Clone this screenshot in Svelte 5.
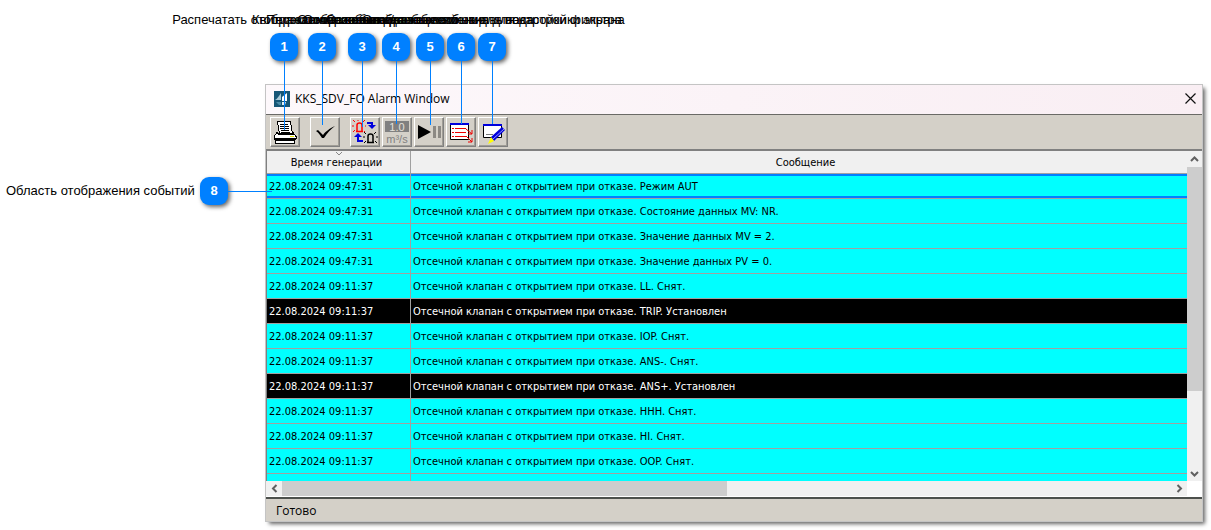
<script>
  const callouts = [
    { n: 1, x: 284, line: 69, text: 'Распечатать отображаемые события' },
    { n: 2, x: 322, line: 64, text: 'Квитирование событий' },
    { n: 3, x: 362, line: 66, text: 'Переключение окна сообщений' },
    { n: 4, x: 396, line: 63, text: 'Отображение данных события' },
    { n: 5, x: 430, line: 64, text: 'Остановка/возобновление вывода' },
    { n: 6, x: 461, line: 63, text: 'Отображение диалогового окна для настройки экрана' },
    { n: 7, x: 492, line: 63, text: 'Отображение окна для настройки фильтра' }
  ];

  const valve = 'Отсечной клапан с открытием при отказе. ';

  const events = [
    { time: '22.08.2024 09:47:31', text: 'Режим AUT', selected: true },
    { time: '22.08.2024 09:47:31', text: 'Состояние данных MV: NR.' },
    { time: '22.08.2024 09:47:31', text: 'Значение данных MV = 2.' },
    { time: '22.08.2024 09:47:31', text: 'Значение данных PV = 0.' },
    { time: '22.08.2024 09:11:37', text: 'LL. Снят.' },
    { time: '22.08.2024 09:11:37', text: 'TRIP. Установлен', alarm: true },
    { time: '22.08.2024 09:11:37', text: 'IOP. Снят.' },
    { time: '22.08.2024 09:11:37', text: 'ANS-. Снят.' },
    { time: '22.08.2024 09:11:37', text: 'ANS+. Установлен', alarm: true },
    { time: '22.08.2024 09:11:37', text: 'HHH. Снят.' },
    { time: '22.08.2024 09:11:37', text: 'HI. Снят.' },
    { time: '22.08.2024 09:11:37', text: 'OOP. Снят.' }
  ];
</script>

<main class="page">
  <section class="window">
    <header class="titlebar">
      <svg class="logo" viewBox="0 0 16 16" width="16" height="16">
        <rect width="16" height="16" fill="#175776" />
        <path d="M7 2v7H1C3 8 5 5 7 2z" fill="#a9c9d6" />
        <path d="M8 6l5-4v8H8z" fill="#fff" />
        <path d="M2 11h5v3H5z" fill="#4c8da8" />
        <path d="M8 11h4l-1 3H8z" fill="#e4f1f5" />
      </svg>
      <h1>KKS_SDV_FO Alarm Window</h1>
      <button class="close" aria-label="Закрыть">
        <svg viewBox="0 0 11 11" width="11" height="11"><path d="M.5.5l10 10M10.5.5l-10 10" stroke="#111" stroke-width="1.2" /></svg>
      </button>
    </header>

    <div class="toolbar">
      <button class="tool" aria-label="Печать">
        <svg viewBox="0 0 26 26" width="26" height="26" shape-rendering="crispEdges">
          <path d="M5.500 2.500h13l2 12h-13z" fill="#fff" stroke="#000" />
          <path d="M8 5.500h8M8 7.500h9M8 9.500h9M9 11.500h8M9 13.500h9" stroke="#000" fill="none" />
          <path d="M5 13.500l-3 4v2h22v-2l-3-4v2H7z" fill="#fff" stroke="#000" />
          <path d="M2 19h22v2H2z" fill="#000" />
          <path d="M18 17h4v1h-4z" fill="#e5e500" />
          <path d="M3.500 21.500h19v3h-19z" fill="#fff" stroke="#000" />
        </svg>
      </button>
      <button class="tool" aria-label="Квитировать">
        <svg viewBox="0 0 26 26" width="26" height="26"><path d="M4 12l2-1 5 5c3-4 6-6 12-9-4 3-8 7-11 12h-2c-2-3-3-5-6-7z" fill="#000" /></svg>
      </button>
      <div class="group">
        <button class="tool" aria-label="Переключить">
          <svg viewBox="0 0 26 26" width="26" height="26" fill="none">
            <path d="M5 12V6q0-2 2.500-2T10 6v6M4 12.500h7" stroke="#f00" stroke-width="1.500" />
            <path d="M1 1l2 2M6 1v1M13 1l-2 2M0 7h2M13 7h1M1 13l2-2M13 13l-1-1" stroke="#f00" />
            <path d="M15 4h5v3" stroke="#00d" stroke-width="2" />
            <path d="M16 6h8l-4 4z" fill="#00d" />
            <path d="M11 22H6v-4" stroke="#00d" stroke-width="2" />
            <path d="M2 18h8l-4-4z" fill="#00d" />
            <path d="M16 23v-6q0-2 2.500-2t2.500 2v6M15 23.500h7" stroke="#000" stroke-width="1.500" />
            <path d="M12 13l2 2M24 13l-2 2M11 18h2M24 18h2M12 24l2-2M25 24l-2-2" stroke="#000" />
          </svg>
        </button>
        <button class="tool" aria-label="Данные">
          <svg viewBox="0 0 26 26" width="26" height="26">
            <rect x="1" y="2" width="24" height="11" fill="#808080" />
            <text x="13" y="12" text-anchor="middle" fill="#e4e1dc">1.0</text>
            <text x="13" y="24" text-anchor="middle" fill="#808080">m³/s</text>
          </svg>
        </button>
        <button class="tool" aria-label="Пауза">
          <svg viewBox="0 0 26 26" width="26" height="26">
            <path d="M2 6l13 7-13 7z" fill="#000" />
            <path d="M17 7h3v12h-3zM22 7h3v12h-3z" fill="#8c8984" />
          </svg>
        </button>
        <button class="tool" aria-label="Настройки экрана">
          <svg viewBox="0 0 26 26" width="26" height="26" fill="none">
            <path d="M2.500 5.500h18v15h-18z" fill="#fff" stroke="#000" />
            <path d="M2 4h19v2H2z" fill="#00d" />
            <path d="M4 9.500h2M4 13.500h2M4 17.500h2M7 9.500h11M7 13.500h11M7 17.500h11" stroke="#e00" />
            <path d="M18 10l6 5M24 11v4h-4M18 17l6 6M24 19v4h-4" stroke="#e00" />
          </svg>
        </button>
        <button class="tool" aria-label="Настройки фильтра">
          <svg viewBox="0 0 26 26" width="26" height="26">
            <path d="M3.500 6.500h18v12h-18z" fill="#fff" stroke="#000" />
            <path d="M3 5h19v2H3z" fill="#00d" />
            <path d="M6 15.500h7" stroke="#777" />
            <path d="M11 18L22 8l3 3-11 11z" fill="#00d" />
            <path d="M13 20L24 10" stroke="#fff" stroke-width=".6" />
            <path d="M11 18l3 4-6 3z" fill="#ff0" />
          </svg>
        </button>
      </div>
    </div>

    <div class="viewer">
      <div class="viewport">
        <table>
          <thead>
            <tr>
              <th class="time">
                <svg class="sort" viewBox="0 0 8 4" width="8" height="4"><path d="M1 0l3 3 3-3" fill="none" stroke="#888" /></svg>
                Время генерации
              </th>
              <th class="message">Сообщение</th>
            </tr>
          </thead>
          <tbody>
            {#each events as event}
              <tr class:selected={event.selected} class:alarm={event.alarm}>
                <td>{event.time}</td>
                <td>{valve}{event.text}</td>
              </tr>
            {/each}
            <tr class="rest"><td></td><td></td></tr>
          </tbody>
        </table>
      </div>
      <div class="scroll vertical">
        <button aria-label="Вверх"><svg viewBox="0 0 9 9" width="9" height="9"><path d="M1 6l3.500-3.500L8 6" /></svg></button>
        <div class="track"><div class="thumb"></div></div>
        <button aria-label="Вниз"><svg viewBox="0 0 9 9" width="9" height="9"><path d="M1 3l3.500 3.500L8 3" /></svg></button>
      </div>
      <div class="scroll horizontal">
        <button aria-label="Влево"><svg viewBox="0 0 9 9" width="9" height="9"><path d="M6.500 1L3 4.500 6.500 8" /></svg></button>
        <div class="track"><div class="thumb"></div></div>
        <button aria-label="Вправо"><svg viewBox="0 0 9 9" width="9" height="9"><path d="M2.500 1L6 4.500 2.500 8" /></svg></button>
      </div>
    </div>

    <footer class="status">Готово</footer>
  </section>

  {#each callouts as c}
    <div class="callout" style="left: {c.x}px">
      <span class="label">{c.text}</span>
      <span class="badge">{c.n}</span>
      <span class="line" style="height: {c.line}px"></span>
    </div>
  {/each}

  <div class="callout-side">
    <span class="label">Область отображения событий</span>
    <span class="badge">8</span>
    <span class="line"></span>
  </div>
</main>

<style>
  :global(body) {
    margin: 0;
    background: #fff;
  }

  .page {
    position: relative;
    padding: 85px 9px 9px 266px;
    font-family: 'Liberation Sans', Arial, sans-serif;
    font-size: 13px;
    color: #000;
  }

  button {
    margin: 0;
    padding: 0;
    border: 0;
    background: none;
    display: flex;
    align-items: center;
    justify-content: center;
  }

  .window {
    box-shadow: 0 0 0 1px #c4c4c4, 3px 3px 4px #666;
    background: #fff;
  }

  .titlebar {
    display: flex;
    align-items: center;
    gap: 5px;
    height: 30px;
    padding: 0 6px 2px 8px;
    background: linear-gradient(90deg, #fdf8fb, #f9eef3);
    border-bottom: 1px solid #6a6a66;
    box-sizing: border-box;
  }

  .titlebar h1 {
    flex: 1;
    margin: 0;
    font: 12px/16px 'Open Sans', 'Noto Sans', sans-serif;
  }

  .toolbar {
    display: flex;
    gap: 10px;
    padding: 2px 4px;
    background: #d4d0c8;
    border-bottom: 2px solid #808080;
  }

  .group {
    display: flex;
    gap: 2px;
  }

  .tool {
    width: 30px;
    height: 30px;
    border: 1px solid;
    border-color: #fff #808080 #808080 #fff;
    box-shadow: inset -1px -1px #a09d96;
  }

  .tool text {
    font: 11px 'Liberation Sans', Arial, sans-serif;
  }

  .viewer {
    display: grid;
    grid-template-columns: 1fr 15px;
    border-bottom: 2px solid #4c504c;
    padding-bottom: 1px;
  }

  .viewport {
    min-width: 0;
    overflow: hidden;
    border-left: 1px solid #808080;
  }

  table {
    width: 100%;
    table-layout: fixed;
    border-collapse: separate;
    border-spacing: 0;
    font: 11px/14px 'DejaVu Sans Condensed', Tahoma, sans-serif;
  }

  th {
    height: 23px;
    padding: 2px 0 0;
    box-sizing: border-box;
    background: #f0f0f0;
    border-bottom: 1px solid #a0a0a0;
    font-weight: normal;
  }

  th.time {
    position: relative;
    width: 144px;
    padding-right: 4px;
  }

  th.message {
    padding-left: 13px;
  }

  .sort {
    position: absolute;
    top: 1px;
    left: 68px;
  }

  td {
    height: 25px;
    padding: 2px 2px 0;
    box-sizing: border-box;
    background: #0ff;
    border-bottom: 1px solid #a0a0a0;
    white-space: nowrap;
  }

  th:first-child,
  td:first-child {
    border-right: 1px solid #a0a0a0;
  }

  .selected td {
    box-shadow: inset 0 2px #0080ff, inset 0 -2px #0080ff;
  }

  .alarm td {
    background: #000;
    color: #fff;
  }

  .rest td {
    height: 7px;
    border-bottom: 0;
  }

  .scroll {
    display: flex;
    background: #f0f0f0;
  }

  .scroll button {
    flex: none;
    width: 16px;
    height: 16px;
  }

  .scroll path {
    fill: none;
    stroke: #606060;
    stroke-width: 2;
  }

  .track {
    flex: 1;
    display: flex;
  }

  .thumb {
    background: #cdcdcd;
  }

  .vertical {
    flex-direction: column;
  }

  .vertical button {
    width: 15px;
  }

  .vertical .thumb {
    width: 100%;
    height: 75%;
  }

  .horizontal button {
    height: 15px;
  }

  .horizontal .thumb {
    width: 50%;
  }

  .status {
    padding: 3px 10px 1px;
    background: #d4d0c8;
    font: 12px/18px 'Open Sans', 'Noto Sans', sans-serif;
  }

  .callout {
    position: absolute;
    top: 12px;
    width: 0;
    display: flex;
    flex-direction: column;
    align-items: center;
    pointer-events: none;
  }

  .label {
    line-height: 16px;
    white-space: nowrap;
  }

  .badge {
    flex: none;
    width: 28px;
    border-radius: 9px;
    background: #0080ff;
    box-shadow: 2px 2px 4px #666;
    color: #fff;
    font-weight: bold;
    line-height: 28px;
    text-align: center;
  }

  .callout .badge {
    margin-top: 5px;
  }

  .callout .line {
    flex: none;
    width: 1px;
    background: #0080ff;
  }

  .callout-side {
    position: absolute;
    top: 177px;
    left: 6px;
    display: flex;
    align-items: center;
    pointer-events: none;
  }

  .callout-side .label {
    width: 194px;
  }

  .callout-side .line {
    width: 44px;
    height: 1px;
    background: #0080ff;
  }
</style>
